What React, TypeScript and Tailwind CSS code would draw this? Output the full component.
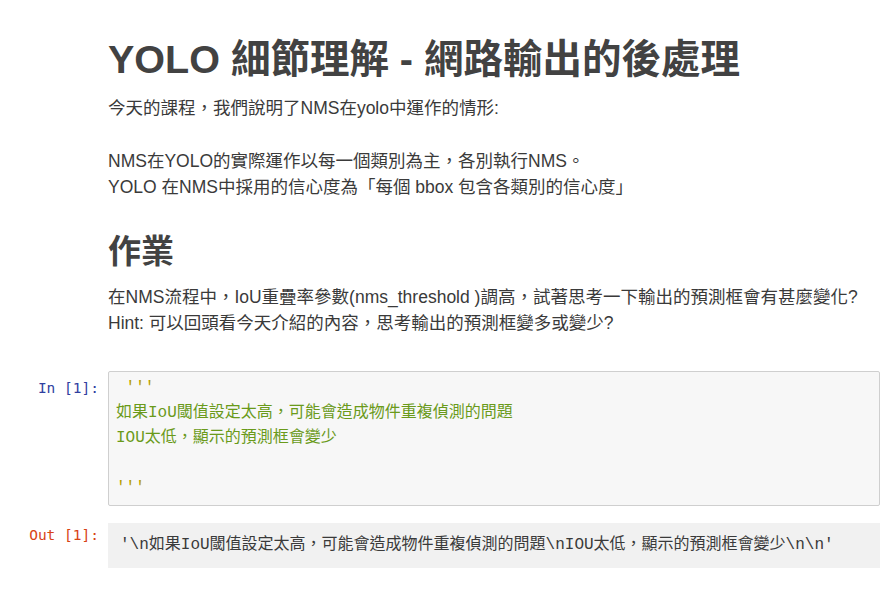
const sans = {
  fontFamily: '"Liberation Sans", Arial, "Noto Sans CJK TC", sans-serif',
};

const Prompt = ({ label, out }: { label: string; out?: boolean }) => (
  <div
    className={`w-[108px] shrink-0 pr-[9px] text-right text-[14.5px] leading-[25px] whitespace-pre font-['DejaVu_Sans_Mono','Noto_Sans_CJK_TC',monospace] ${
      out ? "text-[#D84315]" : "pt-[5px] text-[#303F9F]"
    }`}
  >
    {label}
  </div>
);

export default function App() {
  return (
    <div className="min-h-screen w-[894px] bg-white pt-[35px] text-[#3a3a3a]" style={sans}>
      {/* markdown cell */}
      <div className="pl-[108px] pr-2">
        <h1 className="text-[39.5px] leading-[48px] font-bold whitespace-nowrap text-[#424242]">
          YOLO 細節理解 - 網路輸出的後處理
        </h1>
        <p className="mt-[12px] text-[17.5px] leading-[26px]">
          今天的課程，我們說明了NMS在yolo中運作的情形:
        </p>
        <p className="mt-[27px] text-[17.5px] leading-[26px]">
          NMS在YOLO的實際運作以每一個類別為主，各別執行NMS。
          <br />
          YOLO 在NMS中採用的信心度為「每個 bbox 包含各類別的信心度」
        </p>
        <h2 className="mt-[32px] text-[33px] leading-[40px] font-bold text-[#424242]">作業</h2>
        <p className="mt-[12px] text-[17.5px] leading-[26px] whitespace-nowrap">
          在NMS流程中，IoU重疊率參數(nms_threshold )調高，試著思考一下輸出的預測框會有甚麼變化?
          <br />
          Hint: 可以回頭看今天介紹的內容，思考輸出的預測框變多或變少?
        </p>
      </div>

      {/* code cell */}
      <div className="mt-[35px] flex pr-[14px]">
        <Prompt label="In [1]:" />
        <div className="flex-1 rounded-[2px] border border-[#cfcfcf] bg-[#f7f7f7] px-[7px] py-[4px] text-[16px] leading-[25px] whitespace-pre font-['Liberation_Mono','Noto_Sans_CJK_TC',monospace]">
          <div className="text-[#b8a000]"> '''</div>
          <div className="text-[#6a9a1a]">如果IoU閾值設定太高，可能會造成物件重複偵測的問題</div>
          <div className="text-[#6a9a1a]">IOU太低，顯示的預測框會變少</div>
          <div> </div>
          <div className="text-[#b8a000]">'''</div>
        </div>
      </div>

      <div className="mt-[17px] flex pr-[14px]">
        <Prompt label="Out [1]:" out />
        <div className="flex-1 bg-[#f1f1f1] pl-[12px] py-[10px] text-[16px] leading-[25px] whitespace-pre text-[#3a3a3a] font-['Liberation_Mono','Noto_Sans_CJK_TC',monospace]">
          {"'\\n如果IoU閾值設定太高，可能會造成物件重複偵測的問題\\nIOU太低，顯示的預測框會變少\\n\\n'"}
        </div>
      </div>
    </div>
  );
}
